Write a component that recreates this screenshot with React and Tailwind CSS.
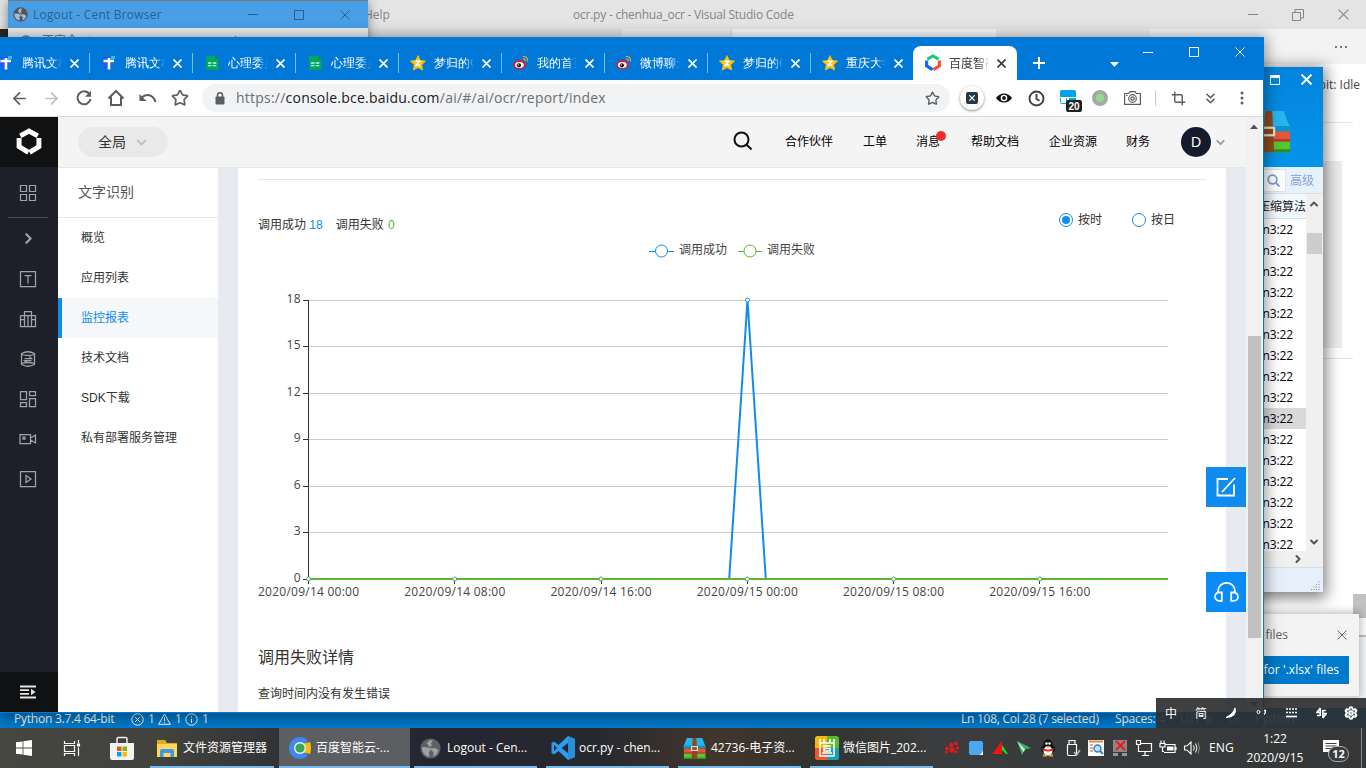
import React from "react";
import {
  Crop, ChevronsDown, ChevronDown, ChevronRight, ChevronUp, Settings, Star, ArrowLeft, ArrowRight,
} from "lucide-react";

const UI = "font-['Open_Sans','Noto_Sans_CJK_SC',sans-serif]";

function CloseX({ size = 10, className = "", w = 1 }) {
  return (
    <svg width={size} height={size} viewBox="0 0 10 10" className={className} fill="none" stroke="currentColor" strokeWidth={w}>
      <path d="M.5.5l9 9M9.5.5l-9 9" />
    </svg>
  );
}

function Globe({ size = 15, className = "", land = "#fff" }) {
  return (
    <svg width={size} height={size} viewBox="0 0 20 20" className={className}>
      <circle cx="10" cy="10" r="9.6" fill="currentColor" />
      <path d="M2 8.500l6 .5 2 2.500-1.500 2 .5 4.300C4.500 17.300 1.500 13 2 8.500zM9 2.200l3.500.2L10.500 5l1 2-2.500 1.500L11 10l3.500-.5 3.300 2.500-2.300 4-3 1.500.5-4-3-2.500L8 7 6.500 5z" fill={land} />
    </svg>
  );
}

function StarFav() {
  return (
    <svg width="16" height="16" viewBox="0 0 16 16">
      <path d="M8 .6l2.200 4.900 5.400.6-4 3.600 1.100 5.400L8 12.500l-4.700 2.600 1.100-5.400-4-3.600 5.400-.6z" fill="#ffc81e" stroke="#f9b800" strokeWidth=".9" />
      <path d="M5.600 6.300h4.200L6.300 10h4" fill="none" stroke="#fff" strokeWidth="1.400" />
    </svg>
  );
}
function SheetFav() {
  return (
    <svg width="16" height="16" viewBox="0 0 16 16">
      <path d="M2 1h9.500L14.500 4v11H2z" fill="#00a862" />
      <path d="M11.500 1l3 3h-3z" fill="#0a7a48" />
      <path d="M4 8h3.500M8.800 8h3.500M4 10.600h3.500M8.800 10.600h3.500" stroke="#c9f5df" strokeWidth="1.300" />
    </svg>
  );
}
function DocFav() {
  return (
    <svg width="16" height="16" viewBox="0 0 16 16">
      <path d="M1 2h9l2 4-3 9H5L2 10z" fill="#1f5cf0" />
      <path d="M10 1h4v3h-4z" fill="#23c8f0" />
      <path d="M2.500 6h10.500M8 3v11.500" stroke="#fff" strokeWidth="2.600" fill="none" />
    </svg>
  );
}
function WeiboFav() {
  return (
    <svg width="17" height="16" viewBox="0 0 17 16">
      <ellipse cx="7" cy="10" rx="6.800" ry="4.700" fill="#e6162d" />
      <path d="M2 8c2-4 5-5 6-2l4 1z" fill="#e6162d" />
      <ellipse cx="6.800" cy="10.200" rx="4.700" ry="3.200" fill="#fff" />
      <circle cx="6.300" cy="10.500" r="2.200" fill="#111" />
      <circle cx="5.700" cy="10" r=".7" fill="#fff" />
      <path d="M10.500 1.200c3.500-.6 5.500 2 4.800 5M10.800 3.700c1.600-.2 2.500.9 2.200 2.300" fill="none" stroke="#f5a030" strokeWidth="1.200" />
    </svg>
  );
}
function HexLogo({ a, b, c, size }) {
  return (
    <svg width={size} height={size} viewBox="0 0 24 24" fill="none" strokeWidth="4.200">
      <path d="M4.500 6.700L12 2.600l7.500 4.100" stroke={a} />
      <path d="M3.500 8.600v7.300l8 5" stroke={b} />
      <path d="M20.500 8.600v7.300l-8 5" stroke={c} />
    </svg>
  );
}

const tabs = [
  [DocFav, "腾讯文档"], [DocFav, "腾讯文档"], [SheetFav, "心理委员"], [SheetFav, "心理委员"], [StarFav, "梦归的QQ"],
  [WeiboFav, "我的首页"], [WeiboFav, "微博聊天"], [StarFav, "梦归的QQ"], [StarFav, "重庆大学"],
];

function Tab({ Icon, title, last }) {
  return (
    <div className="flex h-[34px] w-[103px] shrink-0 items-center pl-[11px]">
      <span className="flex w-4 shrink-0"><Icon /></span>
      <span className="ml-2 w-10 shrink-0 overflow-hidden whitespace-nowrap text-[12px] font-medium text-white [mask-image:linear-gradient(90deg,#000_75%,transparent)]">{title}</span>
      <span className="ml-[8px] flex w-[10px] shrink-0"><CloseX size={9} w={1.9} className="text-white" /></span>
      {!last && <span className="ml-[9px] h-5 w-px shrink-0 bg-[#7dbaed]" />}
    </div>
  );
}

function Cell({ children, className = "" }) {
  return <div className={"flex h-8 w-8 shrink-0 items-center justify-center " + className}>{children}</div>;
}

function BrowserToolbar() {
  return (
    <div className="flex h-[37px] shrink-0 items-center border-b border-[#dadce0] bg-white pl-[3px] text-[#5a5d61]">
      <Cell><ArrowLeft size={19} strokeWidth={2.200} /></Cell>
      <Cell><ArrowRight size={19} strokeWidth={2.200} className="text-[#bfbfbf]" /></Cell>
      <Cell className="pl-px">
        <svg width="16" height="16" viewBox="0 0 16 16" fill="none" stroke="currentColor" strokeWidth="2"><path d="M13.400 4A6.500 6.500 0 1 0 14.500 9" /><path d="M15 .8v6H9z" fill="currentColor" stroke="none" /></svg>
      </Cell>
      <Cell className="pl-[2px]">
        <svg width="18" height="18" viewBox="0 0 18 18" fill="none" stroke="currentColor" strokeWidth="2"><path d="M1.500 9.500L9 2l7.500 7.500M4 8v8h10V8" /></svg>
      </Cell>
      <Cell className="pl-[2px]">
        <svg width="18" height="16" viewBox="0 0 18 16" fill="none" stroke="currentColor" strokeWidth="2"><path d="M2 8c5.500-5 12-3.500 14.500 4" /><path d="M.5 4v7h7z" fill="currentColor" stroke="none" /></svg>
      </Cell>
      <Cell className="pl-[2px]"><Star size={18} strokeWidth={2.200} /></Cell>
      <div className="ml-[7px] flex h-7 w-[748px] shrink-0 items-center rounded-full bg-[#f1f3f4] pl-[13px]">
        <svg width="10" height="13" viewBox="0 0 10 13"><rect x=".5" y="4.500" width="9" height="8" rx="1" fill="currentColor" /><path d="M2.500 5V3.300a2.500 2.500 0 0 1 5 0V5" fill="none" stroke="currentColor" strokeWidth="1.500" /></svg>
        <span className={UI + " ml-[11px] flex-1 whitespace-nowrap pb-px text-[14px] tracking-[0.225px] text-[#6b6e72]"}>
          https://<span className="text-[#202124]">console.bce.baidu.com</span>/ai/#/ai/ocr/report/index
        </span>
        <Star size={15} strokeWidth={2.200} className="mr-[10px]" />
      </div>
      <Cell className="ml-[6px]">
        <span className="flex h-6 w-6 items-center justify-center rounded-full bg-white shadow-[0_1px_3px_rgba(0,0,0,.45)]">
          <span className="flex h-3 w-3 items-center justify-center rounded-[2px] bg-[#263947] text-white"><CloseX size={6} w={2} /></span>
        </span>
      </Cell>
      <Cell>
        <svg width="18" height="12" viewBox="0 0 18 12"><path d="M1 6c4-6 12-6 16 0-4 6-12 6-16 0z" fill="#111" /><circle cx="9" cy="6" r="3.300" fill="#fff" /><circle cx="9" cy="6" r="1.900" fill="#111" /></svg>
      </Cell>
      <Cell>
        <svg width="17" height="17" viewBox="0 0 17 17" fill="none" stroke="#3d4043" strokeWidth="1.900"><circle cx="8.500" cy="8.500" r="7" /><path d="M8.500 4v5l3 1.800" /></svg>
      </Cell>
      <Cell className="relative">
        <svg width="16" height="16" viewBox="0 0 16 16"><path d="M0 2q0-2 2-2h12q2 0 2 2v5H0z" fill="#00a1ee" /><path d="M0 8h7v6H2q-2 0-2-2zM9 8h7v6H9z" fill="#00a8f4" /><path d="M1 8h5v5H1z" fill="#fff" /></svg>
        <span className="absolute left-[14px] top-[18px] flex h-3 w-4 items-center justify-center rounded-[2px] bg-[#1f2022] font-['Liberation_Sans',sans-serif] text-[10px] font-bold text-white">20</span>
      </Cell>
      <Cell><span className="h-4 w-4 rounded-full border-4 border-[#a8a8a8] bg-[#8fdc8f]" /></Cell>
      <Cell>
        <svg width="17" height="14" viewBox="0 0 17 14" fill="none" stroke="currentColor" strokeWidth="1.200"><path d="M.6 2.500h4L6 .6h5l1.400 1.900h4v10.900H.6z" /><circle cx="8.500" cy="7.500" r="3.800" /><circle cx="8.500" cy="7.500" r="1.700" /><path d="M2 4.500h1.500" /></svg>
      </Cell>
      <span className="ml-[7px] h-4 w-px bg-[#c9cbce]" />
      <Cell className="ml-[6px]"><Crop size={15} strokeWidth={2.300} /></Cell>
      <Cell><ChevronsDown size={17} strokeWidth={2.200} /></Cell>
      <Cell>
        <svg width="4" height="14" viewBox="0 0 4 14" fill="currentColor"><circle cx="2" cy="2" r="1.500" /><circle cx="2" cy="7" r="1.500" /><circle cx="2" cy="12" r="1.500" /></svg>
      </Cell>
    </div>
  );
}

const railIcons = [
  <path d="M1.500 1.500h15v15h-15zM5.500 5.500h7M9 5.500v8" />,
  <path d="M5.500 16.500v-15h7v15M1.500 5.500h4M12.500 5.500h4v11h-15v-11M1.500 9.500h4M12.500 9.500h4M5.500 5.500h7M9 5.500v11" />,
  <path d="M2.500 3.500q6.500-3.500 13 0v11q-6.500 3.500-13 0zM2.500 4.500q6.500 2 13 0M2.500 13.500q6.500-2 13 0M5.500 8.500h7l-2-2M12.500 10.500h-7l2 2" />,
  <path d="M1.500 1.500h6v8h-6zM10.500 1.500h6v4h-6zM1.500 12.500h6v4h-6zM10.500 8.500h6v8h-6z" />,
  <path d="M1 4.500h10.500v9H1zM11.500 8l5-3v8l-5-3M4 7h2v2H4z" />,
  <path d="M1.500 1.500h15v15h-15zM7 5.500v7l5-3.500z" />,
];

function Rail() {
  return (
    <div className="flex w-[58px] shrink-0 flex-col items-center bg-[#1f1f29] text-[#a2a3a8]">
      <div className="flex h-[50px] w-full items-center justify-center bg-[#0f1112]"><HexLogo size={28} a="#fff" b="#fff" c="#fff" /></div>
      <div className="mr-[2px] mt-[17px] flex h-[18px]">
        <svg width="18" height="18" viewBox="0 0 18 18" fill="none" stroke="currentColor" strokeWidth="1.200"><path d="M1.500 1.500h6v6h-6zM10.500 1.500h6v6h-6zM1.500 10.500h6v6h-6zM10.500 10.500h6v6h-6z" /></svg>
      </div>
      <div className="mr-[2px] mt-[15px] h-px w-10 bg-[#4a4b55]" />
      <div className="flex h-[41px] items-center"><ChevronRight size={17} strokeWidth={3.200} className="mr-px" /></div>
      {railIcons.map((p, i) => (
        <div key={i} className="mr-[2px] flex h-10 items-center">
          <svg width="18" height="18" viewBox="0 0 18 18" fill="none" stroke="currentColor" strokeWidth="1.250">{p}</svg>
        </div>
      ))}
      <div className="mt-auto flex h-10 w-full items-center justify-center bg-[#0f1112] pr-[2px]">
        <svg width="16" height="14" viewBox="0 0 16 14" stroke="#e4e4e4" strokeWidth="1.800" fill="none"><path d="M0 1.500h16M0 5.200h9M0 8.800h9M0 12.500h16" /><path d="M11 3.800v6.400L15.500 7z" fill="#e4e4e4" stroke="none" /></svg>
      </div>
    </div>
  );
}

const nav = ["概览", "应用列表", "监控报表", "技术文档", "SDK下载", "私有部署服务管理"];

function SubNav() {
  return (
    <div className="w-[160px] shrink-0 bg-white">
      <div className="flex h-[50px] items-center border-b border-[#e8e9eb] pl-5 text-[14px] text-[#555]">文字识别</div>
      {nav.map((n) => (
        <div key={n} className={n === "监控报表"
          ? "flex h-10 items-center border-l-4 border-[#108cee] bg-[#f5f7fb] pl-[19px] text-[12px] text-[#108cee]"
          : "flex h-10 items-center pl-[23px] text-[12px] text-[#333]"}>{n}</div>
      ))}
    </div>
  );
}

function Chart() {
  const ys = [18, 15, 12, 9, 6, 3, 0];
  const xs = ["2020/09/14 00:00", "2020/09/14 08:00", "2020/09/14 16:00", "2020/09/15 00:00", "2020/09/15 08:00", "2020/09/15 16:00"];
  return (
    <svg width="988" height="364" viewBox="238 240 988 364" className="block font-['Open_Sans','Noto_Sans_CJK_SC',sans-serif] text-[12px]">
      <g fill="none" stroke="#108cee"><path d="M649 251.500h6M668 251.500h6" /><circle cx="661.500" cy="251" r="6" /></g>
      <text x="679" y="254" fill="#444">调用成功</text>
      <g fill="none" stroke="#5bb531"><path d="M738 251.500h6M756 251.500h6" /><circle cx="750" cy="251" r="6" /></g>
      <text x="767" y="254" fill="#444">调用失败</text>
      {ys.map((v, i) => (
        <g key={v}>
          {v > 0 && <path d={`M308 ${Math.floor(300 + i * 46.5) + 0.5}H1168`} stroke="#ccc" />}
          <path d={`M303 ${Math.floor(300 + i * 46.5) + 0.5}h5`} stroke="#333" />
          <text x="300.500" y={Math.floor(303 + i * 46.5)} textAnchor="end" textLength={v > 9 ? 14 : 7} fill="#444">{v}</text>
        </g>
      ))}
      <path d="M308.500 300v283" stroke="#333" />
      <path d="M308 579H729.200L747.500 300L765.800 579H1168" fill="none" stroke="#108cee" strokeWidth="2" strokeLinejoin="bevel" />
      <path d="M308 579H1168" stroke="#5bb531" strokeWidth="2" />
      <circle cx="747.500" cy="300" r="2" fill="#fff" stroke="#108cee" />
      {xs.map((t, i) => {
        const x = 308.5 + i * 146.25;
        return (
          <g key={t}>
            <path d={`M${Math.floor(x) + 0.5} 580v4`} stroke="#333" />
            <circle cx={x} cy="579" r="2" fill="#fff" stroke="#49a961" />
            <text x={x} y="595.500" textAnchor="middle" textLength="101" fill="#444">{t}</text>
          </g>
        );
      })}
    </svg>
  );
}

function Report() {
  return (
    <div className="w-[988px] shrink-0 bg-white">
      <div className="mx-5 h-[12px] border-b border-[#e5e6e8]" />
      <div className="flex h-[60px] pl-5 text-[12px] text-[#333]">
        <div className="flex flex-1 items-start pt-[36px]">
          <span>调用成功 <span className="text-[#108cee]">18</span></span>
          <span className="ml-[13px]">调用失败 <span className="ml-px text-[#5bb531]">0</span></span>
        </div>
        <div className="flex items-start pr-[51px] pt-[31px]">
          <span className="flex items-center">
            <span className="mr-[5px] flex h-[14px] w-[14px] items-center justify-center rounded-full border border-[#108cee]"><i className="h-2 w-2 rounded-full bg-[#108cee]" /></span>按时
          </span>
          <span className="ml-[30px] flex items-center"><span className="mr-[5px] h-[14px] w-[14px] rounded-full border border-[#108cee]" />按日</span>
        </div>
      </div>
      <Chart />
      <div className="pl-5 pt-[42px] text-[16px] leading-6 text-[#333]">调用失败详情</div>
      <div className="pl-5 pt-[15px] text-[12px] leading-[18px] text-[#333]">查询时间内没有发生错误</div>
    </div>
  );
}

function ConsolePage() {
  return (
    <div className="flex h-[595px] shrink-0 font-['Liberation_Sans','Noto_Sans_CJK_SC',sans-serif]">
      <Rail />
      <div className="flex w-[1188px] shrink-0 flex-col">
        <div className="flex h-[51px] shrink-0 items-center border-b border-[#e6e7e9] bg-[#f4f4f4] text-[12px] text-black">
          <div className="ml-5 flex h-[30px] w-[90px] items-center rounded-full bg-[#e9e9e9] pl-5 text-[14px] text-[#333]">全局<ChevronDown size={15} strokeWidth={3.200} className="ml-2 text-[#bebebe]" /></div>
          <svg width="20" height="20" viewBox="0 0 20 20" fill="none" stroke="#111" strokeWidth="2" className="ml-[565px] mb-[2px]"><circle cx="8.500" cy="8.500" r="7" /><path d="M13.500 13.500l5 5" /></svg>
          <span className="ml-8">合作伙伴</span>
          <span className="ml-[30px]">工单</span>
          <span className="relative ml-[29px]">消息<i className="absolute right-[-6px] top-[-2px] h-[10px] w-[10px] rounded-full bg-[#f02d2d]" /></span>
          <span className="ml-[31px]">帮助文档</span>
          <span className="ml-[30px]">企业资源</span>
          <span className="ml-[29px]">财务</span>
          <span className="ml-[31px] flex h-[30px] w-[30px] items-center justify-center rounded-full bg-[#151b2c] text-[14px] text-white">D</span>
          <ChevronDown size={13} strokeWidth={3.500} className="ml-[3px] text-[#a0a0a0]" />
        </div>
        <div className="flex flex-1 gap-5 overflow-hidden bg-[#e7eaef]">
          <SubNav />
          <Report />
        </div>
      </div>
      <div className="flex w-4 shrink-0 flex-col items-center bg-[#f1f1f1]">
        <svg width="8" height="5" viewBox="0 0 8 5" className="mt-[7px]"><path d="M0 5l4-4.500L8 5z" fill="#505050" /></svg>
        <div className="mt-[207px] h-[302px] w-[13px] bg-[#c1c1c1]" />
        <svg width="8" height="5" viewBox="0 0 8 5" className="mt-auto mb-[5px]"><path d="M0 0l4 4.500L8 0z" fill="#505050" /></svg>
      </div>
    </div>
  );
}

function BrowserWindow() {
  return (
    <div className="absolute left-0 top-[37px] flex h-[676px] w-[1264px] flex-col overflow-hidden border-b border-r border-[#0078d7] bg-white shadow-[0_2px_14px_2px_rgba(0,0,0,.42)]">
      <div className="flex h-[43px] shrink-0 bg-[#0078d7]">
        <div className="ml-[-13px] flex shrink-0 items-end pt-[9px]">
          {tabs.map(([I, t], i) => <Tab key={i} Icon={I} title={t} last={i === 8} />)}
          <div className="ml-[-1px] flex h-[34px] w-[104px] items-center rounded-t-lg bg-white pl-[11px]">
            <HexLogo size={18} a="#1ecb72" b="#1667f2" c="#fa5036" />
            <span className="ml-[7px] w-10 shrink-0 overflow-hidden whitespace-nowrap font-['Noto_Sans_CJK_SC',sans-serif] text-[12px] text-[#3c4043] [mask-image:linear-gradient(90deg,#000_75%,transparent)]">百度智能</span>
            <CloseX size={9} w={1.9} className="ml-2 text-[#3c4043]" />
          </div>
        </div>
        <svg width="12" height="12" viewBox="0 0 12 12" className="ml-4 mt-5 text-white" stroke="currentColor" strokeWidth="2"><path d="M6 0v12M0 6h12" /></svg>
        <svg width="9" height="5" viewBox="0 0 9 5" className="ml-[65px] mt-[25px]"><path d="M0 0h9L4.500 5z" fill="#fff" /></svg>
        <div className="ml-[24px] mt-[10px] flex h-[10px] gap-[36px] text-white">
          <i className="mt-[5px] h-px w-[10px] bg-white" />
          <i className="h-[10px] w-[10px] border border-white" />
          <CloseX />
        </div>
      </div>
      <BrowserToolbar />
      <ConsolePage />
      <div className="absolute left-[1206px] top-[430px] flex h-10 w-10 items-center justify-center bg-[#108cee]">
        <svg width="20" height="20" viewBox="0 0 20 20" fill="none" stroke="#fff" strokeWidth="1.800"><path d="M12 2H1.500v16.500H18V7.500M19 1L6 15" /></svg>
      </div>
      <div className="absolute left-[1206px] top-[535px] flex h-10 w-10 items-center justify-center bg-[#0a8bf5]">
        <svg width="25" height="21" viewBox="0 0 24 20" fill="none" stroke="#fff" strokeWidth="1.700"><path d="M4 10V8a8 7.200 0 0 1 16 0v2M7.500 10v8H5a4 4 0 0 1 0-8zM16.500 10v8H19a4 4 0 0 0 0-8z" /></svg>
      </div>
    </div>
  );
}

function Winrar({ size }) {
  return (
    <svg width={size} height={size} viewBox="0 0 24 24">
      <path d="M4 1h16l3.500 9H.5z" fill="#25b6ee" /><path d="M.5 9h23v3H.5z" fill="#138fd0" />
      <path d="M1 12h22.500v5.500H1z" fill="#e4573a" /><path d="M1 16h22.500v1.500H1z" fill="#b63a24" />
      <path d="M1 17.500h22.500V23H1z" fill="#55c732" /><path d="M1 21.500h22.500V23H1z" fill="#2e8f1c" />
      <path d="M10 1h4l1 22H9z" fill="#8c4a20" /><rect x="9" y="10" width="6" height="4" fill="none" stroke="#e8dccb" strokeWidth="1.200" />
    </svg>
  );
}

function ArchiveWindow() {
  return (
    <div className="absolute left-[1063px] top-[67px] flex h-[525px] w-[260px] flex-col bg-white shadow-[0_3px_14px_3px_rgba(0,0,0,.5)]">
      <div className="h-[100px] shrink-0 bg-gradient-to-b from-[#0384dc] to-[#0595e8] text-white">
        <div className="flex justify-end gap-[21px] pr-[11px] pt-[6px]">
          <i className="mt-[2px] h-[10px] w-[10px] border border-t-[3px] border-white" />
          <CloseX size={11} w={1.800} className="mt-px" />
        </div>
        <div className="flex justify-end pr-[32px] pt-[24px]">
          <Winrar size={45} />
        </div>
      </div>
      <div className="flex h-[27px] shrink-0 items-center justify-end border-b border-[#d8dfe8] bg-[#e5f2fc] font-['Noto_Sans_CJK_SC',sans-serif] text-[12px] text-[#8c9fd6]">
        <span className="flex h-[23px] w-[40px] items-center justify-end border border-[#dce5ee] bg-white pr-[5px]">
          <svg width="13" height="13" viewBox="0 0 13 13" fill="none" stroke="#8099cc" strokeWidth="1.800"><circle cx="5.500" cy="5.500" r="4.300" /><path d="M8.500 8.500l4 4" /></svg>
        </span>
        <span className="ml-1 mr-[9px]">高级</span>
      </div>
      <div className="flex h-[357px] shrink-0 overflow-hidden">
        <div className="w-[243px]">
          <div className="flex h-[25px] items-center justify-end border-b border-[#cfe0ef] bg-[#f1f8fe] font-['Noto_Sans_CJK_SC',sans-serif] text-[12px] text-[#222]">压缩算法</div>
          {Array.from({ length: 16 }, (_, i) => (
            <div key={i} className={i === 9 ? "flex h-[21px] items-center justify-end bg-[#d9d9d9] pr-[13px]" : "flex h-[21px] items-center justify-end pr-[13px]"}>
              <span className={UI + " text-[12px] tracking-[-0.1px] text-black"}>Bzin3:22</span>
            </div>
          ))}
        </div>
        <div className="flex flex-1 flex-col items-center bg-[#f0f0f0]">
          <ChevronUp size={12} strokeWidth={4} className="mr-px mt-1 text-[#555]" />
          <div className="mt-[23px] h-[21px] w-[15px] bg-[#cdcdcd]" />
          <ChevronDown size={12} strokeWidth={4} className="mr-px mt-auto mb-[3px] text-[#555]" />
        </div>
      </div>
      <div className="flex h-4 shrink-0 items-center justify-end bg-[#f0f0f0] pr-[19px] text-[#555]"><ChevronRight size={12} strokeWidth={4} /></div>
      <div className="flex flex-1 items-end justify-end border-t border-[#cfe0ef] bg-[#e7f0fa] p-[2px]">
        <svg width="10" height="10" viewBox="0 0 10 10" stroke="#8a8f96" strokeWidth="1" strokeDasharray="1 1.500"><path d="M0 9.500h10M2.500 7h7.500M5 4.500h5M7.500 2H10" /></svg>
      </div>
    </div>
  );
}

function CodeWindow() {
  return (
    <div className={UI + " flex h-[728px] w-full flex-col bg-white"}>
      <div className="flex h-[29px] shrink-0 items-center bg-[#e4e4e4] text-[12px] text-[#858585]">
        <span className="w-[573px] pl-[364px]">Help</span>
        <span className="w-[675px] whitespace-nowrap tracking-[-0.23px]">ocr.py - chenhua_ocr - Visual Studio Code</span>
        <i className="h-px w-[10px] bg-[#858585]" />
        <svg width="12" height="12" viewBox="0 0 12 12" className="ml-[34px]" fill="none" stroke="currentColor"><path d="M.5 3.500h8v8h-8zM3 3V.5h8.500V9H9" /></svg>
        <CloseX size={11} className="ml-[34px]" />
      </div>
      <div className="flex h-[35px] shrink-0 bg-[#f3f3f3]">
        <i className="w-[8px] bg-[#2b2b2b]" />
        <i className="w-[614px] bg-[#dfdfdf]" />
        <i className="w-[109px] bg-[#ececec]" />
        <i className="w-[265px] border-l border-[#ddd] bg-[#fafafa]" />
        <i className="w-[154px] bg-[#e9e9e9]" />
        <span className="ml-auto mr-[19px] mt-[17px] flex gap-[3px] text-[#777]"><i className="h-[2px] w-[2px] bg-current" /><i className="h-[2px] w-[2px] bg-current" /><i className="h-[2px] w-[2px] bg-current" /></span>
      </div>
      <div className="flex h-[644px] flex-col items-end">
        <div className="h-[58px] pr-[6px] pt-[12px] text-[12px] leading-[17px] text-[#444]">Python 3.7.4 64-bit: Idle</div>
        <div className="mr-[13px] h-[39px] w-[90px] border-t border-[#e6e6e6]" />
        <div className="mr-[24px] h-[187px] w-[80px] bg-[#ececec]" />
        <div className="mr-[13px] mt-[10px] h-[236px] w-[90px] border-t border-[#e6e6e6]" />
        <div className="h-[24px] w-[13px] bg-[#c1c1c1]" />
        <div className="mt-[17px] h-[73px] w-[13px] border-t-2 border-[#c1c1c1] bg-[#f4f6fa]" />
      </div>
      <div className="flex h-[20px] shrink-0 items-center bg-[#007acc] pl-[14px] pt-[2px] text-[12px] text-white">
        <span className="w-[117px] whitespace-nowrap tracking-[-0.24px]">Python 3.7.4 64-bit</span>
        <svg width="13" height="13" viewBox="0 0 13 13" fill="none" stroke="currentColor"><circle cx="6.500" cy="6.500" r="5.700" /><path d="M4.200 4.200l4.600 4.600M8.800 4.200L4.200 8.800" /></svg>
        <span className="w-[14px] pl-1">1</span>
        <svg width="13" height="12" viewBox="0 0 13 12" fill="none" stroke="currentColor"><path d="M6.500 1L12.300 11.300H.7zM6.500 4.500v3.700M6.500 9.200v1" /></svg>
        <span className="w-[14px] pl-1">1</span>
        <svg width="13" height="13" viewBox="0 0 13 13" fill="none" stroke="currentColor"><circle cx="6.500" cy="6.500" r="5.700" /><path d="M6.500 3.200v1.200M6.500 5.800v4" /></svg>
        <span className="pl-1">1</span>
        <span className="ml-auto flex w-[405px] shrink-0 whitespace-nowrap">
          <span className="w-[154px] tracking-[-0.26px]">Ln 108, Col 28 (7 selected)</span>
          <span className="w-[65px] tracking-[-0.2px]">Spaces: 4</span>
          <span className="w-[48px]">UTF-8</span>
          <span className="w-[27px]">LF</span>
          <span>Python</span>
        </span>
      </div>
      <div className="absolute left-[960px] top-[614px] h-[82px] w-[399px] bg-[#f3f3f3] text-[12px] shadow-[0_0_8px_2px_rgba(0,0,0,.25)]">
        <div className="flex h-[42px] items-center justify-end pr-[12px] text-[#616161]">Excel files<CloseX size={10} className="ml-[49px]" /></div>
        <div className="flex justify-end pr-[10px]"><span className="flex h-7 items-center bg-[#007acc] px-[10px] tracking-[0.05px] text-white">Open for '.xlsx' files</span></div>
      </div>
    </div>
  );
}

function LogoutWindow() {
  return (
    <div className="absolute left-[8px] top-0 h-[60px] w-[360px] border-t border-[#777] bg-[#ececec] shadow-[0_2px_10px_rgba(0,0,0,.45)]">
      <div className={UI + " flex h-[27px] items-center bg-[#489fe6] pl-[5px] text-[12px] text-[#2b5f8c]"}>
        <Globe size={15} className="text-[#555]" land="#9dbfdb" />
        <span className="ml-[5px] flex-1 tracking-[0.2px]">Logout - Cent Browser</span>
        <i className="h-px w-[10px] bg-current" />
        <i className="ml-[36px] h-[10px] w-[10px] border border-current" />
        <CloseX size={10} className="ml-[36px] mr-[18px]" />
      </div>
      <div className={UI + " flex h-5 items-center pl-[12px] pt-[6px] text-[14px] text-[#444]"}>
        <svg width="12" height="12" viewBox="0 0 12 12" fill="none" stroke="#777" strokeWidth="1.500"><circle cx="6" cy="6" r="5" /></svg>
        <span className="ml-[10px] text-[12px] text-[#777]">不安全</span><span className="ml-[8px] text-[#999]">|</span>
        <span className="ml-2">202.202.0.163<span className="text-[#777]">:8080/lo0</span></span>
      </div>
    </div>
  );
}

function ImeBar() {
  return (
    <div className="absolute left-[1156px] top-[698px] flex h-[30px] w-[210px] items-center bg-[#2d2f31]/92 font-['Noto_Sans_CJK_SC',sans-serif] text-[12px] text-white">
      <span className="flex w-[30px] justify-center">中</span>
      <span className="flex w-[30px] justify-center">简</span>
      <span className="flex w-[30px] justify-center"><svg width="10" height="10" viewBox="0 0 10 10"><path d="M9 0q2.500 9-9 9.500Q7 6 9 0z" fill="#fff" stroke="#fff" strokeLinejoin="round" /></svg></span>
      <span className="flex w-[30px] justify-center"><svg width="11" height="8" viewBox="0 0 11 8" fill="none" stroke="#fff"><circle cx="2.500" cy="3" r="1.500" /><path d="M8 1.500h1.500q0 3-1.500 4" strokeWidth="1.400" /></svg></span>
      <span className="flex w-[30px] justify-center"><svg width="11" height="10" viewBox="0 0 11 10" stroke="#fff" strokeWidth="1.700" strokeDasharray="2 1"><path d="M0 1h11M0 4.500h11" /><path d="M0 8.500h11" strokeDasharray="none" /></svg></span>
      <span className="flex w-[30px] justify-center"><svg width="11" height="12" viewBox="0 0 11 12" stroke="#fff" strokeWidth="1.600" fill="none"><path d="M4.300 1v8M4.300 1L.8 5.500h3.500M6.800 3v8M6.800 11l3.500-4.500H6.800M6.800 3.500h3M1 8.500h3" /></svg></span>
      <span className="flex w-[30px] justify-center"><Settings size={14} strokeWidth={3.500} /></span>
    </div>
  );
}

function TaskButton({ icon, label, className = "w-[123px]" }) {
  return (
    <div className={"flex h-10 shrink-0 items-center border-b-2 border-[#76b9ed] pt-[2px] text-[12px] text-white " + className}>
      <span className="flex w-[33px] shrink-0 justify-center">{icon}</span>
      <span className="whitespace-nowrap">{label}</span>
    </div>
  );
}

function TrayCell({ children }) {
  return <span className="flex w-6 shrink-0 justify-center"><svg width="18" height="18" viewBox="0 0 18 18" fill="none">{children}</svg></span>;
}

function Taskbar() {
  return (
    <div className={UI + " flex h-10 w-full items-center bg-[linear-gradient(90deg,#464641_0%,#42423e_12%,#2f3035_22%,#24252f_32%,#28292f_44%,#41352c_52%,#33332f_60%,#3a3c3d_68%,#343637_100%)]"}>
      <div className="flex w-12 justify-center">
        <svg width="16" height="16" viewBox="0 0 16 16" fill="#fff"><path d="M0 2.300L6.600 1.400V7.600H0zM7.400 1.300L16 0v7.600H7.400zM0 8.400h6.600v6.200L0 13.700zM7.400 8.400H16V16l-8.600-1.300z" /></svg>
      </div>
      <div className="flex w-12 justify-center">
        <svg width="18" height="17" viewBox="0 0 18 17" fill="none" stroke="#fff" strokeWidth="1.200"><path d="M1.500 1v2.500h10V1M1.500 5.500h10v6h-10zM1.500 16v-2.500h10V16M15.500 0v3M15.500 7.500V16" /><path d="M14.500 4h2v2h-2z" fill="#fff" /></svg>
      </div>
      <div className="flex w-[54px] justify-center pl-[2px] pr-[5px]">
        <svg width="24" height="24" viewBox="0 0 24 24"><path d="M7 8V3q0-1.500 1.500-1.500h7Q17 1.500 17 3v5" fill="none" stroke="#f0f0f0" strokeWidth="1.500" /><path d="M0 7h24v15q0 2-2 2H2q-2 0-2-2z" fill="#f3f3f3" /><path d="M7 10.500h4.500V15H7z" fill="#f25022" /><path d="M12.500 10.500H17V15h-4.500z" fill="#7fba00" /><path d="M7 16h4.500v4.500H7z" fill="#00a4ef" /><path d="M12.500 16H17v4.500h-4.500z" fill="#ffb900" /></svg>
      </div>
      <TaskButton className="w-[124px]" label="文件资源管理器" icon={<svg width="22" height="19" viewBox="0 0 22 19"><path d="M1 1h8l2 3h10v14H1z" fill="#e9a81c" /><path d="M1 5h20v13H1z" fill="#ffd75e" /><path d="M4 18v-6q0-2 2-2h10q2 0 2 2v6h-3.500v-4h-7v4z" fill="#3a9be0" /></svg>} />
      <div className="ml-[5px] flex h-10 w-[131px] shrink-0 items-center border-b-2 border-[#76b9ed] bg-[#5d5e62] pt-[2px] text-[12px] text-white">
        <svg width="22" height="22" viewBox="0 0 22 22" className="ml-[10px] mr-[5px]"><path d="M18.500 3A11 11 0 1 0 18.500 19L14 11z" fill="#4285f4" /><path d="M11 7.500L21 5q2 6 0 12l-10-2.500z" fill="#fbbc05" /><circle cx="11" cy="11" r="6" fill="#e9f0e9" /><circle cx="11" cy="11" r="4.600" fill="#34a853" /></svg>
        <span className="whitespace-nowrap">百度智能云-...</span>
      </div>
      <TaskButton className="ml-1 w-[123px]" label="Logout - Cen..." icon={<Globe size={21} className="text-[#5f6063]" land="#a0a1a3" />} />
      <TaskButton className="ml-[9px] w-[123px]" label="ocr.py - chen..." icon={<svg width="24" height="24" viewBox="0 0 24 24"><path d="M17 0l7 3v18l-7 3L7.500 15 3 18.500 0.500 17V7L3 5.500 7.500 9z" fill="#2a9df0" /><path d="M17 7v10l-6.500-5zM3 9v6l3-3z" fill="#26272e" /><path d="M17 0l7 3v18l-7 3z" fill="#2489ca" opacity=".6" /></svg>} />
      <TaskButton className="ml-[9px] w-[123px]" label="42736-电子资..." icon={<Winrar size={23} />} />
      <TaskButton className="ml-[9px] w-[123px]" label="微信图片_202..." icon={<svg width="24" height="24" viewBox="0 0 24 24"><rect width="24" height="24" rx="3" fill="#5cba32" /><path d="M0 12V3q0-3 3-3h9v12z" fill="#f5b915" /><path d="M0 12h12v12H3q-3 0-3-3z" fill="#ec5a2c" /><path d="M12 12h12v9q0 3-3 3h-9z" fill="#1a9db8" /><path d="M5 3v17h14V3M5 7h14M8 10h8M7 17h10M9 12.500h6v2.500H9zM9 3v4M15 3v4" fill="none" stroke="#fff" strokeWidth="1.600" /></svg>} />
      <div className="ml-[7px] flex items-center">
        <TrayCell><g fill="#e01820"><circle cx="4" cy="9.500" r="2" /><circle cx="3.500" cy="13" r="1.500" /><circle cx="8.500" cy="6" r="2.200" /><circle cx="13" cy="4.500" r="2" /><circle cx="9" cy="11" r="2.700" /><circle cx="14.500" cy="9" r="1.800" /><circle cx="13" cy="13" r="1.500" /></g></TrayCell>
        <TrayCell><rect x="2" y="2" width="14" height="14" rx="2" fill="#4aa8f0" /><path d="M16 11v5h-5q4 0 5-5z" fill="#fff" /></TrayCell>
        <TrayCell><path d="M11 2v13H1z" fill="#f31212" /><path d="M11 6l6 9h-2l-4-4z" fill="#14e02c" /></TrayCell>
        <TrayCell><path d="M2 2l14 7-6 1.500L7 16z" fill="#3fae63" /><path d="M2 2l8 8.500-1.500 2.500z" fill="#dff5e5" /></TrayCell>
        <TrayCell><ellipse cx="9" cy="10" rx="7" ry="5" fill="#111" /><ellipse cx="9" cy="5.500" rx="4.500" ry="5" fill="#111" /><ellipse cx="9" cy="12" rx="4.500" ry="4.500" fill="#fff" /><path d="M3.500 9q5.500 3 11 0v2q-5 3-11 0z" fill="#e8232b" /><circle cx="7.500" cy="4.500" r="1.200" fill="#fff" /><circle cx="10.500" cy="4.500" r="1.200" fill="#fff" /><path d="M6 7.200h6L9 8.700zM4 15.500h4v2H4zM10 15.500h4v2h-4z" fill="#f5a81c" /></TrayCell>
        <TrayCell><path d="M6 5V1.500h6V5M4.500 5.500h9V15q0 1.500-1.500 1.500H6Q4.500 16.500 4.500 15zM8 3h.5M10 3h.5" stroke="#fff" strokeWidth="1.200" /><path d="M11 13l2.500 3L17 11" stroke="#bbb" strokeWidth="1.500" /></TrayCell>
        <TrayCell><path d="M1 1h16v16H1z" fill="#fff" /><path d="M2 2.500h14" stroke="#d84" strokeWidth="2" /><path d="M3 6h3M3 9h3M3 12h3" stroke="#c44" /><circle cx="10.500" cy="9.500" r="3.500" fill="#bfe0fa" stroke="#3484c6" strokeWidth="1.500" /><path d="M13 12l3 3" stroke="#3484c6" strokeWidth="2" /></TrayCell>
        <TrayCell><path d="M2 1h14v12H2z" fill="#888" /><path d="M5 2l9 9M14 2l-9 9" stroke="#f01818" strokeWidth="2" /><path d="M2 14h5v3H2zM11 14h5v3h-5z" fill="#999" /></TrayCell>
        <TrayCell><path d="M6 4.500h10.500v8H4M10 13v3M7 16.500h7M1.500 1.500h4v4h-4zM3.500 5.500V13" stroke="#fff" strokeWidth="1.200" /></TrayCell>
        <TrayCell><path d="M6 5.500h10v8H5M17 8v3M2 1.500v3M5 1.500v3M1 4.500h5V8H1zM3.500 8v4.500H5" stroke="#fff" strokeWidth="1.200" /><path d="M8 7.500h6.500v4H8z" fill="#fff" /></TrayCell>
        <TrayCell><path d="M1.500 7h2.500l4-4v12l-4-4H1.500z" stroke="#fff" strokeWidth="1.100" /><path d="M10.500 6.500q1.500 2.500 0 5M12.500 4.500q3 4.500 0 9" stroke="#fff" /><path d="M15 3q3 6 0 12" stroke="#888" /></TrayCell>
      </div>
      <span className="ml-[5px] w-[26px] text-[12px] tracking-[0.1px] text-white">ENG</span>
      <div className="ml-[10px] w-[60px] whitespace-nowrap text-center text-[12px] leading-[19px] text-white"><div>1:22</div><div>2020/9/15</div></div>
      <div className="relative ml-[18px] flex w-[28px]">
        <svg width="16" height="16" viewBox="0 0 16 16"><path d="M0 0h16v12H9l-4 4v-4H0z" fill="#fff" /><path d="M2.500 3.500h11M2.500 6h11M2.500 8.500h8" stroke="#3a3c3d" /></svg>
        <span className="absolute left-[5px] top-[6px] flex h-4 w-[21px] items-center justify-center rounded-full border border-[#aaa] bg-[#3a3c3d] text-[11px] font-bold text-white">12</span>
      </div>
      <i className="ml-auto mr-1 h-10 w-px bg-[#8a8a8a]" />
    </div>
  );
}

export default function App() {
  return (
    <div className="relative h-[768px] w-[1366px] overflow-hidden bg-black">
      <CodeWindow />
      <Taskbar />
      <div className="absolute left-0 top-0 h-[728px] w-full overflow-hidden">
        <LogoutWindow />
        <ArchiveWindow />
        <BrowserWindow />
        <ImeBar />
      </div>
    </div>
  );
}
